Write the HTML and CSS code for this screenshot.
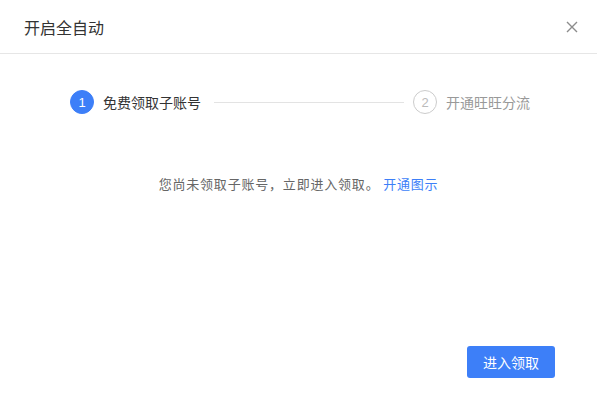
FILE: index.html
```html
<!DOCTYPE html>
<html lang="zh-CN">
<head>
    <meta charset="UTF-8">
    <title>开启全自动</title>
    <link rel="stylesheet" href="styles.css">
</head>
<body>
    <div class="dialog">
        <div class="header">
            <span class="judul">开启全自动</span>
            <button class="tutup" aria-label="关闭">
                <svg width="12" height="12" viewBox="0 0 12 12">
                    <path d="M1 1L11 11M11 1L1 11" stroke="#8c8c8c" stroke-width="1.4" fill="none"/>
                </svg>
            </button>
        </div>
        <div class="isi">
            <div class="langkah">
                <div class="step aktif">
                    <span class="nomor">1</span>
                    <span class="label">免费领取子账号</span>
                </div>
                <div class="garis"></div>
                <div class="step">
                    <span class="nomor">2</span>
                    <span class="label">开通旺旺分流</span>
                </div>
            </div>
            <p class="pesan">您尚未领取子账号，立即进入领取。 <a href="#">开通图示</a></p>
        </div>
        <div class="footer">
            <button class="tombol-biru">进入领取</button>
        </div>
    </div>
</body>
</html>
```

FILE: styles.css
```css
body {
    margin: 0;
    font-family: "Noto Sans CJK SC", "Noto Sans", sans-serif;
    background-color: #fff;
}

.dialog {
    width: 597px;
    height: 402px;
    display: flex;
    flex-direction: column;
    background-color: #fff;
}

.header {
    height: 54px;
    box-sizing: border-box;
    padding: 0 19px 0 24px;
    display: flex;
    align-items: center;
    justify-content: space-between;
    border-bottom: 1px solid #e6e6e6;
}

.judul {
    font-size: 16px;
    color: #333;
}

.tutup {
    border: none;
    background: none;
    padding: 0;
    width: 12px;
    height: 12px;
    cursor: pointer;
    display: flex;
}

.isi {
    flex: 1;
}

.langkah {
    display: flex;
    align-items: center;
    padding: 36px 67px 0 70px;
}

.step {
    display: flex;
    align-items: center;
    gap: 9px;
}

.nomor {
    width: 22px;
    height: 22px;
    border-radius: 50%;
    border: 1px solid #ccc;
    color: #bbb;
    font-size: 13px;
    display: flex;
    align-items: center;
    justify-content: center;
    font-family: "Liberation Sans", Arial, sans-serif;
}

.label {
    font-size: 14px;
    color: #999;
}

.step.aktif .nomor {
    background-color: #3d7ff8;
    border-color: #3d7ff8;
    color: #fff;
}

.step.aktif .label {
    color: #333;
}

.garis {
    flex: 1;
    height: 1px;
    background-color: #e3e3e3;
    margin: 0 9px 0 13px;
}

.pesan {
    margin: 60px 0 0;
    text-align: center;
    font-size: 13px;
    letter-spacing: 0.8px;
    color: #666;
}

.pesan a {
    color: #3d7ff8;
    text-decoration: none;
}

.footer {
    display: flex;
    justify-content: flex-end;
    padding: 0 42px 24px 0;
}

.tombol-biru {
    width: 88px;
    height: 32px;
    border: none;
    border-radius: 3px;
    background-color: #3d7ff8;
    color: #fff;
    font-size: 14px;
    font-family: inherit;
    cursor: pointer;
}
```
